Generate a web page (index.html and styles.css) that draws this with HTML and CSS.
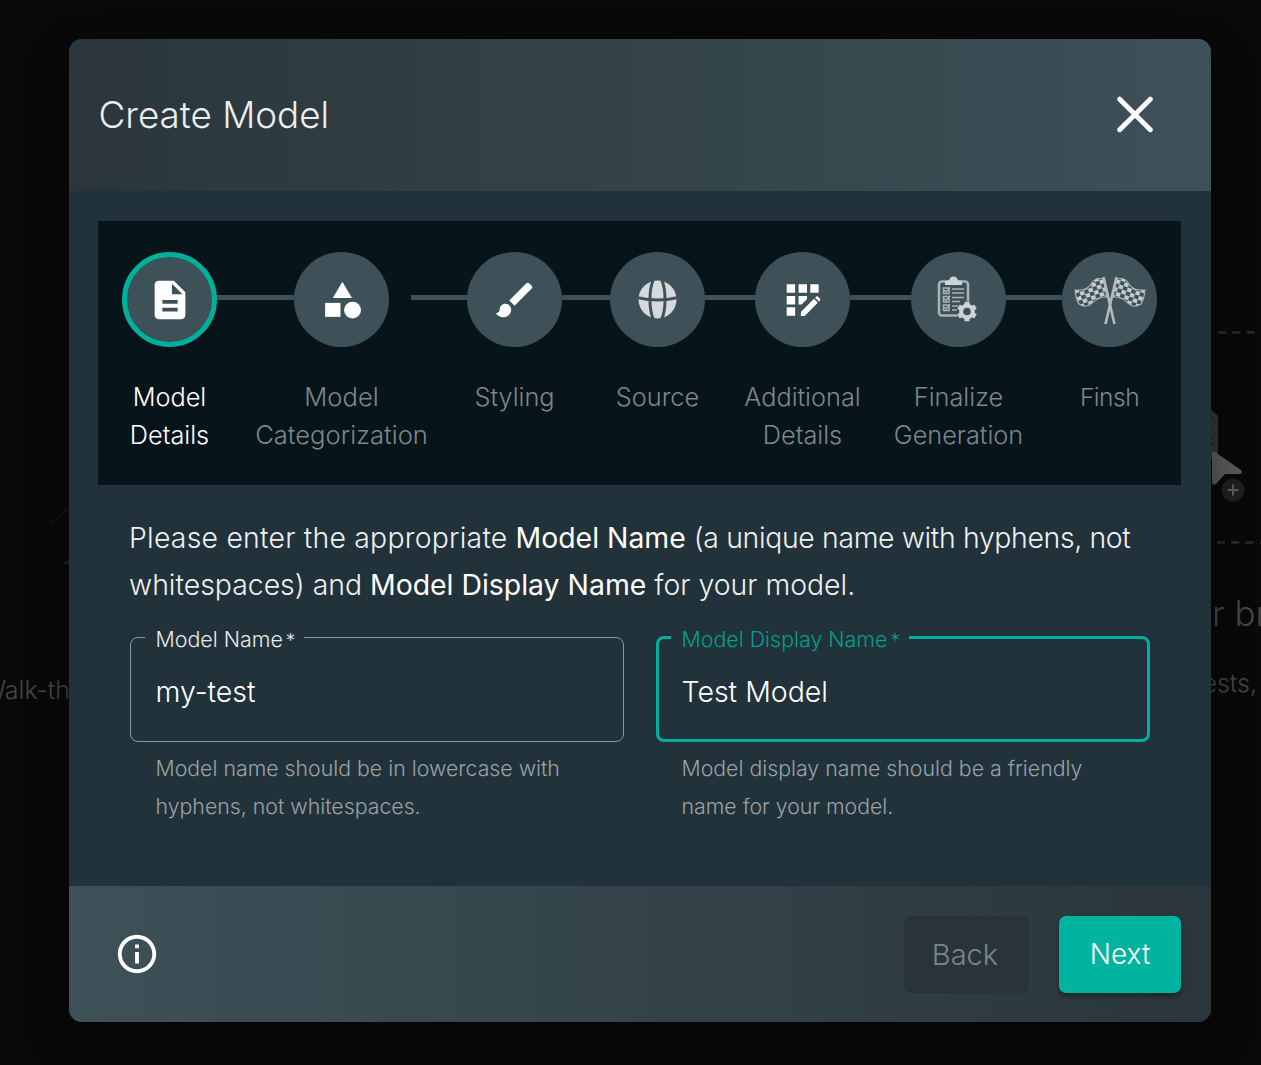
FILE: index.html
```html
<!DOCTYPE html>
<html lang="en">
<head>
<meta charset="utf-8">
<title>Create Model</title>
<link rel="stylesheet" href="styles.css">
</head>
<body>
<div class="backdrop">
  <svg class="sketch" viewBox="0 0 30 70" fill="none">
    <path d="M11 24 30 8" stroke="#191919" stroke-width="1.5"/>
    <path d="M24 64 30 59V64Z" fill="#182421"/>
  </svg>
  <span class="behind walk">Walk-th</span>
  <svg class="dropzone" viewBox="0 0 61 230" fill="none">
    <path d="M8 12.500H61M7 222.500H61" stroke="#2c2c2c" stroke-width="2.4" stroke-dasharray="8 6.3"/>
    <path d="M0 88 8 96V140H0Z" fill="#343434"/>
    <path d="M0 98H2M0 118H2M0 124H2" stroke="#111" stroke-width="2"/>
    <path d="M2 133Q2 130 5 132L31 150Q33 153 30 154H15L6 164Q2 166 2 162Z" fill="#595959"/>
    <circle cx="23" cy="170" r="11.5" fill="#1f1f1f"/>
    <path d="M23 164.500V175.500M17.500 170H28.500" stroke="#5c5c5c" stroke-width="2"/>
  </svg>
  <span class="behind bring">r bring</span>
  <span class="behind requests">requests,</span>
</div>

<div class="dialog">
  <header class="head">
    <h1 class="title">Create Model</h1>
    <svg class="close" viewBox="0 0 36 36"><path d="M3.500 3 32.500 32M32.500 3 3.500 32" stroke="#fff" stroke-width="4.600" fill="none" stroke-linecap="round"/></svg>
  </header>

  <main class="body">
    <div class="stepper">
      <div class="step active">
        <div class="dot"><svg viewBox="0 0 24 24"><path fill="#fff" fill-rule="evenodd" d="M14 2H6c-1.100 0-2 .9-2 2v16c0 1.100.9 2 2 2h12c1.100 0 2-.9 2-2V8zM16 18H8v-2h8zM16 14H8v-2h8zM13 9V3.500L18.500 9z"/></svg></div>
        <div class="label">Model<br>Details</div>
      </div>
      <i class="line l1"></i>
      <div class="step">
        <div class="dot"><svg viewBox="0 0 24 24" fill="#fff"><path d="M12.200 2.500 7.200 11h10z"/><circle cx="17.500" cy="17.300" r="4.400"/><path d="M3.200 13.500h8v7.300H3.200z"/></svg></div>
        <div class="label cat">Model<br>Categorization</div>
      </div>
      <i class="line l2"></i>
      <div class="step">
        <div class="dot"><svg viewBox="0 0 24 24" fill="#fff"><path d="M7 14c-1.660 0-3 1.340-3 3 0 1.310-1.160 2-2 2 .92 1.220 2.490 2 4 2 2.210 0 4-1.790 4-4 0-1.660-1.340-3-3-3zm13.710-9.370-1.340-1.340c-.39-.39-1.020-.39-1.410 0L9 12.250 11.750 15l8.960-8.960c.39-.39.39-1.020 0-1.410z"/></svg></div>
        <div class="label">Styling</div>
      </div>
      <i class="line l3"></i>
      <div class="step">
        <div class="dot"><svg class="globe" viewBox="0 0 40 40"><circle cx="20" cy="20" r="19.500" fill="#d3d9dc"/><g fill="none" stroke="#3e5058" stroke-width="3"><path d="M16-1C11 10 11 30 16 41M24-1C29 10 29 30 24 41M-1 18Q20 23 41 18"/></g></svg></div>
        <div class="label">Source</div>
      </div>
      <i class="line l4"></i>
      <div class="step">
        <div class="dot"><svg viewBox="0 0 24 24" fill="#fff"><path d="M3.500 3.800h4.400v4.400H3.500zM9.700 3.800h4.400v4.400H9.700zM15.800 3.800h4.400v4.400H15.800zM3.500 9.900h4.400v4.400H3.500zM3.500 15.800h4.400v4.400H3.500zM9.700 9.900h4.400v1.600L11.300 14.300H9.700zM10.900 18.200 17.700 11.400 19.700 13.400 12.900 20.300H10.900zM18.300 10.800 18.900 10.200Q19.300 9.900 19.700 10.200L20.900 11.400Q21.200 11.800 20.900 12.200L20.300 12.800z"/></svg></div>
        <div class="label">Additional<br>Details</div>
      </div>
      <i class="line l5"></i>
      <div class="step">
        <div class="dot"><svg class="clip" viewBox="0 0 40 46">
          <rect x="2" y="5.500" width="29" height="34" rx="3" fill="none" stroke="#aab3b7" stroke-width="2.600"/>
          <path d="M8 9V6.500Q8 4.500 10 4.500H12Q13 .5 16.500 .5T21 4.500H23Q25 4.500 25 6.500V9Z" fill="#cdd3d6"/>
          <g fill="none" stroke="#aab3b7" stroke-width="1.500"><path d="M6.500 12H12V17.500H6.500ZM6.500 20.500H12V26H6.500ZM6.500 29H12V34.500H6.500Z"/><path d="M7 14 9 16 13 11.500M7 22.500 9 24.500 13 20M7 31 9 33 13 28.500"/><path d="M15 13H27M15 17H27M15 21.500H27M15 25.500H23M15 30H21M15 34H20"/></g>
          <circle cx="30" cy="35.500" r="10.500" fill="#3e5058"/>
          <circle cx="30" cy="35.500" r="5.800" fill="none" stroke="#cdd3d6" stroke-width="4"/>
          <path d="M30 25.700V29M30 42V45.300M21.500 30.600 24.400 32.300M35.600 38.700 38.500 40.400M21.500 40.400 24.400 38.700M35.600 32.300 38.500 30.600" stroke="#cdd3d6" stroke-width="5"/>
        </svg></div>
        <div class="label">Finalize<br>Generation</div>
      </div>
      <i class="line l6"></i>
      <div class="step">
        <div class="dot"><svg class="flags" viewBox="0 0 72 48">
          <defs>
            <pattern id="check" width="9" height="8" patternUnits="userSpaceOnUse" patternTransform="rotate(-20)"><path d="M0 0H4.500V4H0ZM4.500 4H9V8H4.500Z" fill="#c6cdd0"/></pattern>
            <g id="flag">
              <path d="M29 2Q21 0 17 7T1 13Q2 23 5 27Q12 32 18 26T33 20Z" fill="url(#check)" stroke="#aab3b7" stroke-width="1.100"/>
              <path d="M29.500 0 40.500 47" stroke="#b4bcc0" stroke-width="2.600"/>
            </g>
          </defs>
          <use href="#flag"/><use href="#flag" transform="translate(72) scale(-1 1)"/>
        </svg></div>
        <div class="label fin">Finsh</div>
      </div>
    </div>

    <p class="intro"><span class="wide">Please enter the appropriate</span> <b>Model Name</b> <span class="tight">(a unique name with hyphens, not</span><br>whitespaces) and <b>Model Display Name</b> for your model.</p>

    <div class="fields">
      <div class="field">
        <fieldset class="box"><legend>Model Name<span class="star">*</span></legend><div class="value">my-test</div></fieldset>
        <p class="help">Model name should be in lowercase with<br>hyphens, not whitespaces.</p>
      </div>
      <div class="field focused">
        <fieldset class="box"><legend>Model Display Name<span class="star">*</span></legend><div class="value">Test Model</div></fieldset>
        <p class="help">Model display name should be a friendly<br>name for your model.</p>
      </div>
    </div>
  </main>

  <footer class="foot">
    <svg class="info" viewBox="0 0 24 24" fill="#fff"><path d="M11 7h2v2h-2zm0 4h2v6h-2zm1-9C6.480 2 2 6.480 2 12s4.480 10 10 10 10-4.480 10-10S17.520 2 12 2zm0 18c-4.410 0-8-3.590-8-8s3.590-8 8-8 8 3.590 8 8-3.590 8-8 8z"/></svg>
    <button class="btn back">Back</button>
    <button class="btn next">Next</button>
  </footer>
</div>
</body>
</html>
```
FILE: styles.css
```css
* { box-sizing: border-box; }
body {
  margin: 0;
  height: 1065px;
  overflow: hidden;
  background: #090909;
  color: #fff;
  font-family: Inter, "Liberation Sans", sans-serif;
  font-weight: 300;
}
svg { display: block; }

/* dimmed page behind the dialog */
.backdrop { position: absolute; inset: 0; overflow: hidden; }
.behind { position: absolute; color: #454545; white-space: nowrap; }
.walk { right: 1191px; top: 675px; font-size: 25px; line-height: 30px; }
.bring { left: 1212px; top: 592px; font-size: 35px; line-height: 42px; }
.requests { right: 4px; top: 668px; font-size: 25px; line-height: 30px; }
.sketch { position: absolute; left: 39px; top: 500px; width: 30px; height: 70px; }
.dropzone { position: absolute; left: 1210px; top: 320px; width: 61px; height: 230px; }

.dialog {
  position: relative;
  width: 1142px;
  height: 983px;
  margin: 39px 0 0 68.500px;
  display: flex;
  flex-direction: column;
  border-radius: 13px;
  overflow: hidden;
  background: #22323a;
  box-shadow: 0 18px 40px rgba(0, 0, 0, .4);
}
.head {
  height: 152px;
  padding: 0 57px 0 30px;
  display: flex;
  align-items: center;
  justify-content: space-between;
  background: linear-gradient(90deg, #2a363c, #3e5058);
}
.title { margin: 0; font-size: 36.800px; font-weight: 300; line-height: 48px; color: #eceeef; }
.close { width: 38px; height: 38px; }

.body { flex: 1; padding: 30px 29.500px 0 29.500px; }
.stepper {
  height: 264px;
  padding: 31px 0 0 24px;
  display: flex;
  background: #07141a;
}
.step { width: 95px; display: flex; flex-direction: column; align-items: center; flex: none; }
.dot {
  width: 95px;
  height: 95px;
  border-radius: 50%;
  background: #3e5058;
  display: flex;
  align-items: center;
  justify-content: center;
}
.dot svg { width: 46px; height: 46px; }
.dot .globe { width: 39px; height: 39px; }
.dot .clip { width: 40px; height: 46px; margin-right: 3px; margin-bottom: 1px; }
.dot .flags { width: 72px; height: 48px; margin-top: 2px; }
.active .dot { border: 5px solid #00b09c; }
.label {
  margin-top: 31px;
  font-size: 25.300px;
  line-height: 38.300px;
  text-align: center;
  white-space: nowrap;
  color: #7d868a;
}
.cat { font-size: 25.600px; }
.fin { font-size: 24.500px; letter-spacing: -.5px; }
.active .label { color: #fff; }
.line { flex: none; height: 5px; margin-top: 42.500px; background: #3e5058; }
.l1 { width: 77px; }
.l2 { width: 56px; margin-left: 22px; }
.l3 { width: 48px; }
.l4 { width: 50px; }
.l5 { width: 61px; }
.l6 { width: 56px; }

.intro { margin: 29px 0 0 31px; font-size: 28.400px; line-height: 47px; color: #eef0f1; white-space: nowrap; }
.intro b { font-weight: 400; color: #fff; }
.wide { letter-spacing: .22px; }
.tight { letter-spacing: -.35px; }
.fields { display: flex; gap: 32px; margin: 15px 0 0 31.500px; }
.field { width: 494px; }
.box {
  margin: 0;
  height: 119px;
  padding: 0 0 0 14px;
  border: 1.500px solid #8b969b;
  border-radius: 8px;
}
.box legend {
  padding: 0 9px 0 11px;
  font-size: 21.400px;
  line-height: 26px;
  color: #e8eaeb;
  position: relative;
  top: 3px;
}
.star { margin-left: 3px; font-size: 19px; }
.value { padding-left: 11px; margin-top: 24px; font-size: 28.500px; line-height: 34px; }
.focused .box { border: 3px solid #00b09c; padding-left: 12px; }
.focused legend { color: #009f8d; }
.help { margin: 7px 0 0 26px; font-size: 21.300px; line-height: 38.200px; color: #99a2a6; white-space: nowrap; }

.foot {
  height: 136px;
  padding: 0 29.500px 0 45px;
  display: flex;
  align-items: center;
  background: linear-gradient(90deg, #3e5058, #2a363c);
}
.info { width: 46px; height: 46px; margin-right: auto; }
.btn { height: 77px; padding: 0; border: 0; border-radius: 7px; font: 300 28px Inter, "Liberation Sans", sans-serif; }
.back { width: 125px; margin-right: 30px; background: #29343a; color: #7b8589; font-size: 29px; padding-right: 3px; }
.next { width: 122px; background: #00b4a0; color: #fff; box-shadow: 0 4px 5px rgba(0, 0, 0, .3); }
```
